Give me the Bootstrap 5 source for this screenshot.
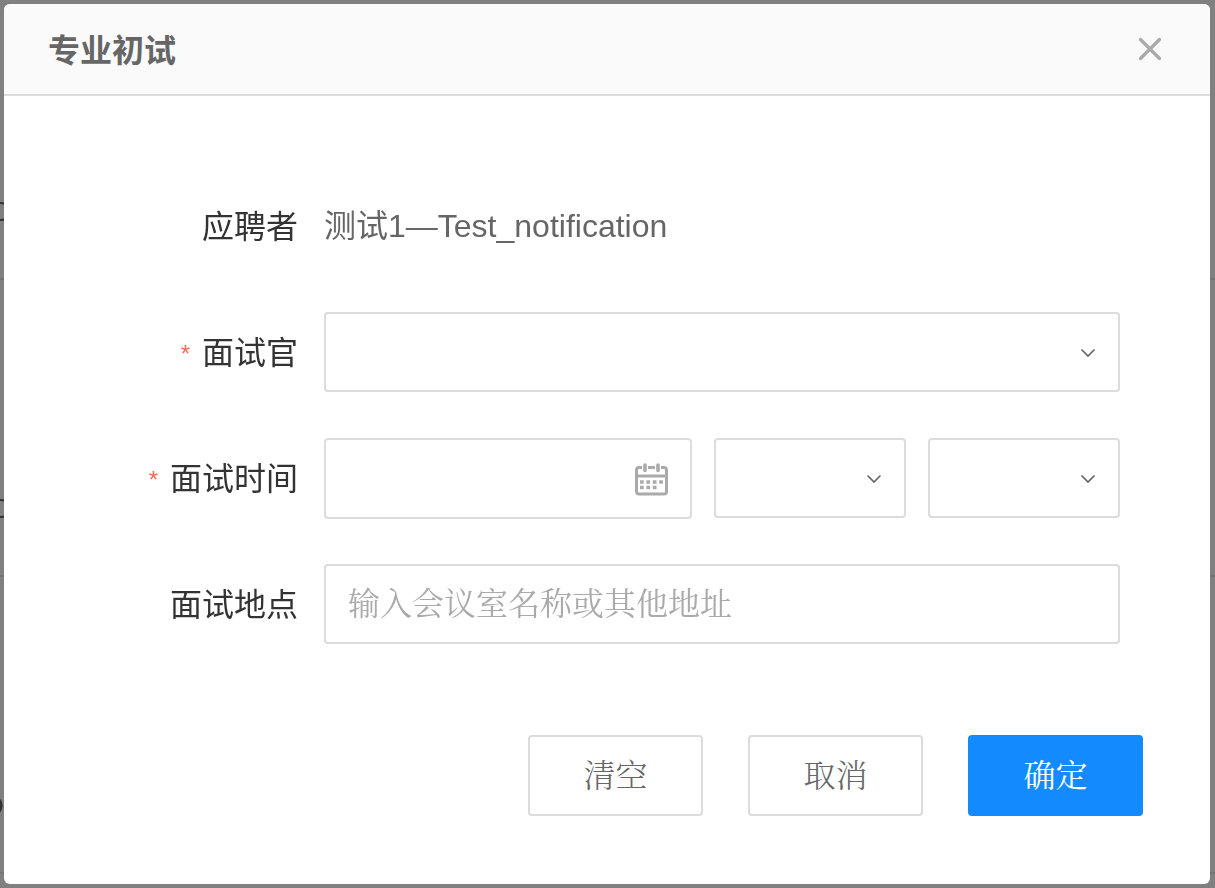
<!DOCTYPE html>
<html lang="zh-CN">
<head>
<meta charset="utf-8">
<meta name="viewport" content="width=device-width, initial-scale=1">
<title>专业初试</title>
<link rel="stylesheet" href="https://cdn.jsdelivr.net/npm/bootstrap@5.3.0/dist/css/bootstrap.min.css">
<style>
  :root { --line: #dcdcdc; --muted: #aaa; --ink: #666; }
  body {
    background: #808080;
    color: var(--ink);
    font-family: "Liberation Sans", "Noto Sans CJK SC", sans-serif;
    font-size: 32px;
    line-height: 40px;
  }
  .dimmed-row { height: 297px; border-bottom: 2px solid #747474; color: #333; font-size: 28px; padding-bottom: 46px; }
  .dimmed-row:first-child { height: 280px; }
  .dimmed-gutter { width: 4px; }
  .page-shell { padding: 4px 5px 4px 4px; }
  .dialog-panel { background: #fff; border-radius: 6px; }
  .dialog-head { background: #fafafa; border-bottom: 2px solid var(--line); padding: 0 45px 0 44px; height: 92px; }
  .dialog-title { font-size: 32px; line-height: 40px; padding-top: 4px; }
  .close-btn { width: 30px; height: 30px; }
  .dialog-form { padding: 90px 90px 0 0; gap: 46px; }
  .field-row { display: grid; grid-template-columns: 294px minmax(0, 1fr); column-gap: 26px; align-items: center; min-height: 80px; }
  .field-label { color: #333; text-align: right; padding-top: 2px; }
  .required-mark { color: #f65; font-size: 24px; margin-right: 12px; vertical-align: 2px; line-height: 1; }
  .time-grid { display: grid; grid-template-columns: 23fr 12fr 12fr; gap: 22px; }
  .field-box, .date-box {
    height: 80px; border: 2px solid var(--line); border-radius: 4px; background-color: #fff;
    color: var(--ink); font-size: 32px; padding: 0 22px;
  }
  .field-box, .foot-btn { font-family: "Liberation Serif", "Noto Serif CJK SC", "Noto Sans CJK SC", serif; }
  .field-box::placeholder { color: var(--muted); opacity: 1; }
  select.field-box {
    background-image: url("data:image/svg+xml,%3Csvg xmlns='http://www.w3.org/2000/svg' viewBox='0 0 16 12'%3E%3Cpath d='M2 4l6 6 6-6' fill='none' stroke='%23666' stroke-width='1.700' stroke-linecap='round'/%3E%3C/svg%3E");
    background-size: 16px 12px; background-position: right 22px center;
  }
  .date-box { height: 81px; margin-bottom: -1px; }
  .date-input { font-size: 32px; }
  .icon-btn { color: var(--muted); }
  .dialog-foot { padding: 91px 67px 68px 0; gap: 45px; }
  .foot-btn { width: 175px; height: 81px; border: 2px solid var(--line); border-radius: 4px; font-size: 32px; font-weight: 300; color: var(--ink); background: #fff; padding: 0; }
  .foot-btn.confirm { background: #148aff; border-color: #148aff; color: #fff; font-weight: 400; }
</style>
</head>
<body>
<div class="position-fixed top-0 start-0 w-100 h-100 overflow-hidden" aria-hidden="true">
  <div class="dimmed-row d-flex align-items-end"><div class="dimmed-gutter d-flex justify-content-center">D</div></div>
  <div class="dimmed-row d-flex align-items-end"><div class="dimmed-gutter d-flex justify-content-center">D</div></div>
  <div class="dimmed-row d-flex align-items-end"><div class="dimmed-gutter d-flex justify-content-end">D</div></div>
</div>
<main class="page-shell position-relative">
  <section class="dialog-panel overflow-hidden" role="dialog" aria-labelledby="dialogTitle">
    <header class="dialog-head d-flex align-items-center justify-content-between">
      <h1 class="dialog-title fw-bold m-0" id="dialogTitle">专业初试</h1>
      <button type="button" class="close-btn btn p-0 border-0 d-flex align-items-center justify-content-center" aria-label="关闭">
        <svg width="24" height="24" viewBox="0 0 24 24" fill="none" stroke="#aaa" stroke-width="3.300" stroke-linecap="round"><path d="M2.500 2.500l19 19M21.500 2.500l-19 19"/></svg>
      </button>
    </header>
    <form>
      <div class="dialog-form d-flex flex-column">
        <div class="field-row">
          <div class="field-label">应聘者</div>
          <div class="applicant">测试1—Test_notification</div>
        </div>
        <div class="field-row">
          <label class="field-label" for="interviewer"><span class="required-mark">*</span>面试官</label>
          <select class="form-select field-box" id="interviewer"><option></option></select>
        </div>
        <div class="field-row">
          <label class="field-label" for="date"><span class="required-mark">*</span>面试时间</label>
          <div class="time-grid">
            <div class="date-box d-flex align-items-center">
              <input type="text" class="date-input form-control border-0 p-0 bg-transparent" id="date">
              <button type="button" class="icon-btn btn p-0 border-0 d-flex" aria-label="选择日期">
                <svg width="33" height="34" viewBox="0 0 33 34" fill="none" stroke="currentColor">
                  <path d="M7 5.500H4Q1.500 5.500 1.500 8V29.500Q1.500 32 4 32H29Q31.500 32 31.500 29.500V8Q31.500 5.500 29 5.500H26M13 5.500h7" stroke-width="3"/>
                  <path d="M2 14h29" stroke-width="3"/>
                  <path d="M10 3v5.500M23 3v5.500" stroke-width="3.600" stroke-linecap="round"/>
                  <path d="M5 20h23" stroke-width="3.600" stroke-dasharray="3.700 2.700"/>
                  <path d="M5 25.500h18" stroke-width="3.400" stroke-dasharray="3.700 2.700"/>
                </svg>
              </button>
            </div>
            <select class="form-select field-box" aria-label="小时"><option></option></select>
            <select class="form-select field-box" aria-label="分钟"><option></option></select>
          </div>
        </div>
        <div class="field-row">
          <label class="field-label" for="place">面试地点</label>
          <input type="text" class="form-control field-box" id="place" placeholder="输入会议室名称或其他地址">
        </div>
      </div>
      <div class="dialog-foot d-flex justify-content-end">
        <button type="reset" class="foot-btn btn">清空</button>
        <button type="button" class="foot-btn btn">取消</button>
        <button type="submit" class="foot-btn confirm btn">确定</button>
      </div>
    </form>
  </section>
</main>
<script src="https://cdn.jsdelivr.net/npm/bootstrap@5.3.0/dist/js/bootstrap.bundle.min.js"></script>
</body>
</html>
